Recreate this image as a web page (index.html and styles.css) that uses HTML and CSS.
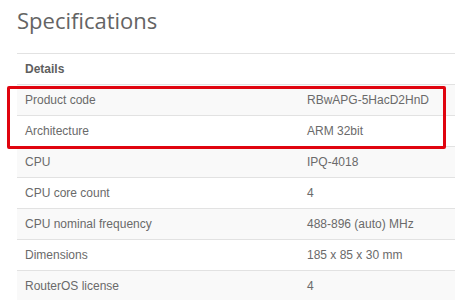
FILE: index.html
```html
<!DOCTYPE html>
<html>
<head>
<meta charset="utf-8">
<link rel="stylesheet" href="styles.css">
</head>
<body>
<div class="page">
  <h1 class="title">Specifications</h1>
  <table class="specs">
    <colgroup><col class="c1"><col class="c2"></colgroup>
    <tr class="head"><th colspan="2">Details</th></tr>
    <tr class="odd"><td>Product code</td><td>RBwAPG-5HacD2HnD</td></tr>
    <tr><td>Architecture</td><td>ARM 32bit</td></tr>
    <tr class="odd"><td>CPU</td><td>IPQ-4018</td></tr>
    <tr><td>CPU core count</td><td>4</td></tr>
    <tr class="odd"><td>CPU nominal frequency</td><td>488-896 (auto) MHz</td></tr>
    <tr><td>Dimensions</td><td>185 x 85 x 30 mm</td></tr>
    <tr class="odd"><td>RouterOS license</td><td>4</td></tr>
  </table>
  <div class="highlight"></div>
</div>
</body>
</html>
```
FILE: styles.css
```css
html, body {
  margin: 0;
  padding: 0;
  background: #fff;
  overflow: hidden;
}
.page {
  position: relative;
  padding-left: 17px;
}
.title {
  margin: 5px 0 18px 0;
  font-family: "Open Sans", sans-serif;
  font-weight: 400;
  font-size: 22px;
  line-height: 30px;
  color: #646464;
}
.specs {
  border-collapse: collapse;
  width: 438px;
  table-layout: fixed;
  font-family: "Liberation Sans", Arial, sans-serif;
  font-size: 12px;
  color: #6a6a6a;
}
.specs col.c1 {
  width: 282px;
}
.specs col.c2 {
  width: 156px;
}
.specs th, .specs td {
  border-top: 1px solid #e2e2e2;
  height: 30px;
  padding: 0 8px;
  text-align: left;
  vertical-align: middle;
  line-height: 14px;
  white-space: nowrap;
}
.specs th {
  font-weight: bold;
  color: #5e5e5e;
}
.specs tr.odd td {
  background: #f9f9f9;
}
.highlight {
  position: absolute;
  left: 7px;
  top: 81px;
  width: 439px;
  height: 63px;
  box-sizing: border-box;
  border: 3px solid #e0040f;
  border-radius: 2px;
}
```
